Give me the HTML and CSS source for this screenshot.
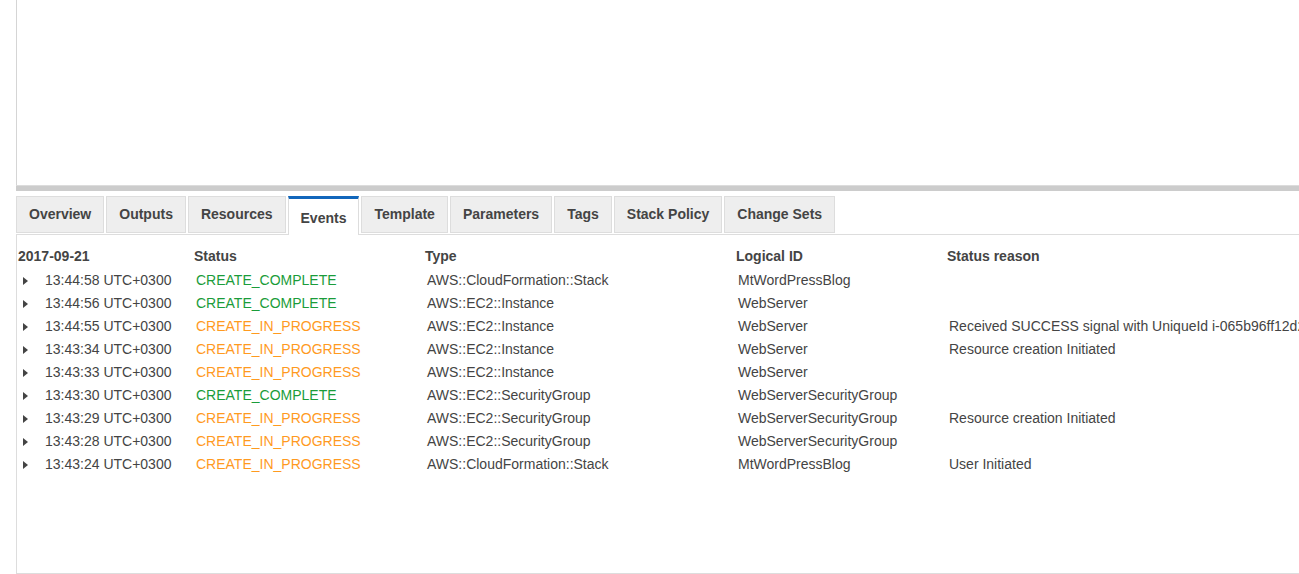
FILE: index.html
```html
<!DOCTYPE html>
<html>
<head>
<meta charset="utf-8">
<link rel="stylesheet" href="styles.css">
</head>
<body>
<div class="page">
  <div class="top-panel"></div>
  <div class="divider"></div>
  <div class="tabs">
    <div class="tab">Overview</div>
    <div class="tab">Outputs</div>
    <div class="tab">Resources</div>
    <div class="tab active">Events</div>
    <div class="tab">Template</div>
    <div class="tab">Parameters</div>
    <div class="tab">Tags</div>
    <div class="tab">Stack Policy</div>
    <div class="tab">Change Sets</div>
  </div>
  <div class="content">
    <div class="events">
      <div class="row head">
        <div class="cell">2017-09-21</div>
        <div class="cell">Status</div>
        <div class="cell">Type</div>
        <div class="cell">Logical ID</div>
        <div class="cell">Status reason</div>
      </div>
      <div class="row">
        <div class="cell time"><span class="caret"></span>13:44:58 UTC+0300</div>
        <div class="cell complete">CREATE_COMPLETE</div>
        <div class="cell">AWS::CloudFormation::Stack</div>
        <div class="cell">MtWordPressBlog</div>
        <div class="cell"></div>
      </div>
      <div class="row">
        <div class="cell time"><span class="caret"></span>13:44:56 UTC+0300</div>
        <div class="cell complete">CREATE_COMPLETE</div>
        <div class="cell">AWS::EC2::Instance</div>
        <div class="cell">WebServer</div>
        <div class="cell"></div>
      </div>
      <div class="row">
        <div class="cell time"><span class="caret"></span>13:44:55 UTC+0300</div>
        <div class="cell progress">CREATE_IN_PROGRESS</div>
        <div class="cell">AWS::EC2::Instance</div>
        <div class="cell">WebServer</div>
        <div class="cell">Received SUCCESS signal with UniqueId i-065b96ff12d2a7e41c</div>
      </div>
      <div class="row">
        <div class="cell time"><span class="caret"></span>13:43:34 UTC+0300</div>
        <div class="cell progress">CREATE_IN_PROGRESS</div>
        <div class="cell">AWS::EC2::Instance</div>
        <div class="cell">WebServer</div>
        <div class="cell">Resource creation Initiated</div>
      </div>
      <div class="row">
        <div class="cell time"><span class="caret"></span>13:43:33 UTC+0300</div>
        <div class="cell progress">CREATE_IN_PROGRESS</div>
        <div class="cell">AWS::EC2::Instance</div>
        <div class="cell">WebServer</div>
        <div class="cell"></div>
      </div>
      <div class="row">
        <div class="cell time"><span class="caret"></span>13:43:30 UTC+0300</div>
        <div class="cell complete">CREATE_COMPLETE</div>
        <div class="cell">AWS::EC2::SecurityGroup</div>
        <div class="cell">WebServerSecurityGroup</div>
        <div class="cell"></div>
      </div>
      <div class="row">
        <div class="cell time"><span class="caret"></span>13:43:29 UTC+0300</div>
        <div class="cell progress">CREATE_IN_PROGRESS</div>
        <div class="cell">AWS::EC2::SecurityGroup</div>
        <div class="cell">WebServerSecurityGroup</div>
        <div class="cell">Resource creation Initiated</div>
      </div>
      <div class="row">
        <div class="cell time"><span class="caret"></span>13:43:28 UTC+0300</div>
        <div class="cell progress">CREATE_IN_PROGRESS</div>
        <div class="cell">AWS::EC2::SecurityGroup</div>
        <div class="cell">WebServerSecurityGroup</div>
        <div class="cell"></div>
      </div>
      <div class="row">
        <div class="cell time"><span class="caret"></span>13:43:24 UTC+0300</div>
        <div class="cell progress">CREATE_IN_PROGRESS</div>
        <div class="cell">AWS::CloudFormation::Stack</div>
        <div class="cell">MtWordPressBlog</div>
        <div class="cell">User Initiated</div>
      </div>
    </div>
  </div>
</div>
</body>
</html>
```

FILE: styles.css
```css
html, body {
  margin: 0;
  padding: 0;
  background: #fff;
  overflow: hidden;
}
body {
  font-family: "Liberation Sans", Arial, sans-serif;
  font-size: 14px;
  color: #444;
}
.page {
  width: 1299px;
  height: 574px;
  padding-left: 16px;
  box-sizing: border-box;
  overflow: hidden;
}
.top-panel {
  height: 185px;
  border-left: 1px solid #d5d5d5;
  width: 1400px;
}
.divider {
  height: 5px;
  width: 1400px;
  background: #cccccc;
  border-top: 1px solid #dcdcdc;
}
.tabs {
  display: flex;
  align-items: flex-start;
  margin-top: 5px;
  height: 38px;
  border-bottom: 1px solid #dddddd;
  width: 1400px;
}
.tab {
  height: 35px;
  line-height: 35px;
  padding: 0 12px;
  margin-right: 2px;
  background: #eeeeee;
  border: 1px solid #dddddd;
  font-weight: bold;
  white-space: nowrap;
}
.tab.active {
  background: #fff;
  border-top: 3px solid #1166bb;
  border-bottom: none;
  height: 36px;
  line-height: 38px;
  position: relative;
  z-index: 1;
  margin-bottom: -1px;
}
.content {
  border-left: 1px solid #dddddd;
  border-bottom: 1px solid #dddddd;
  height: 339px;
  width: 1400px;
  padding-top: 10px;
  box-sizing: border-box;
}
.events {
  display: flex;
  flex-direction: column;
}
.row {
  display: grid;
  grid-template-columns: 176px 231px 311px 211px 1fr;
  height: 23px;
  line-height: 23px;
  white-space: nowrap;
}
.row.head {
  height: 24px;
}
.row.head .cell {
  font-weight: bold;
  padding-left: 1px;
}
.cell {
  padding-left: 3px;
}
.cell.time {
  padding-left: 6px;
  display: flex;
  align-items: center;
}
.caret {
  width: 0;
  height: 0;
  border-left: 5px solid #444;
  border-top: 4px solid transparent;
  border-bottom: 4px solid transparent;
  margin-right: 17px;
}
.complete {
  color: #1a9c3a;
}
.progress {
  color: #ff9a1f;
}
```
